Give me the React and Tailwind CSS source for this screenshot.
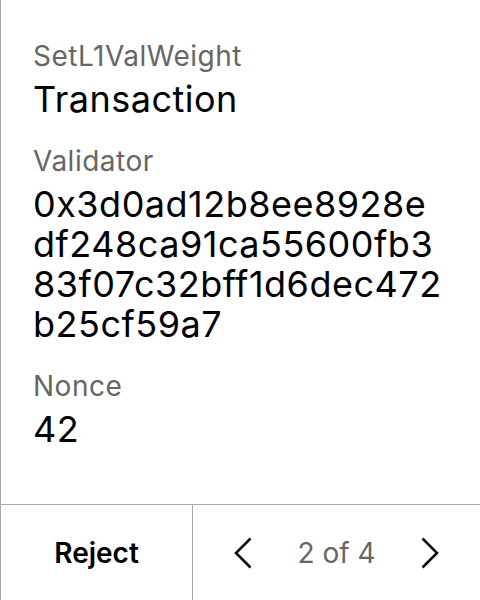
export default function App() {
  return (
    <div
      className="w-[480px] h-[600px] bg-white flex flex-col border-l border-[#aaaaaa]"
      style={{ fontFamily: "Inter, 'Noto Sans', sans-serif" }}
    >
      <div className="flex-1 flex flex-col px-8 pt-[39px] tracking-[0.5px]">
        <div className="flex flex-col gap-[6px]">
          <span className="text-[28px] leading-[34px] text-[#666666]">SetL1ValWeight</span>
          <span className="text-[36px] leading-[40px] text-black">Transaction</span>
        </div>
        <div className="flex flex-col gap-[6px] mt-[25px]">
          <span className="text-[28px] leading-[34px] text-[#666666]">Validator</span>
          <div className="flex flex-col text-[36px] leading-[40px] text-black">
            <span>0x3d0ad12b8ee8928e</span>
            <span>df248ca91ca55600fb3</span>
            <span>83f07c32bff1d6dec472</span>
            <span>b25cf59a7</span>
          </div>
        </div>
        <div className="flex flex-col gap-[6px] mt-[25px]">
          <span className="text-[28px] leading-[34px] text-[#666666]">Nonce</span>
          <span className="text-[36px] leading-[40px] text-black">42</span>
        </div>
      </div>
      <div className="h-[96px] flex border-t border-[#aaaaaa]">
        <div className="w-[192px] flex items-center justify-center border-r border-[#aaaaaa]">
          <span className="text-[28px] font-semibold text-black">Reject</span>
        </div>
        <div className="flex-1 flex items-center justify-between px-[41px]">
          <svg width="18" height="32" viewBox="0 0 18 32" fill="none">
            <path d="M16.5 1.5 L2 16 L16.5 30.5" stroke="black" strokeWidth="2.5" />
          </svg>
          <span className="text-[28px] text-[#666666]">2 of 4</span>
          <svg width="18" height="32" viewBox="0 0 18 32" fill="none">
            <path d="M1.5 1.5 L16 16 L1.5 30.5" stroke="black" strokeWidth="2.5" />
          </svg>
        </div>
      </div>
    </div>
  );
}
